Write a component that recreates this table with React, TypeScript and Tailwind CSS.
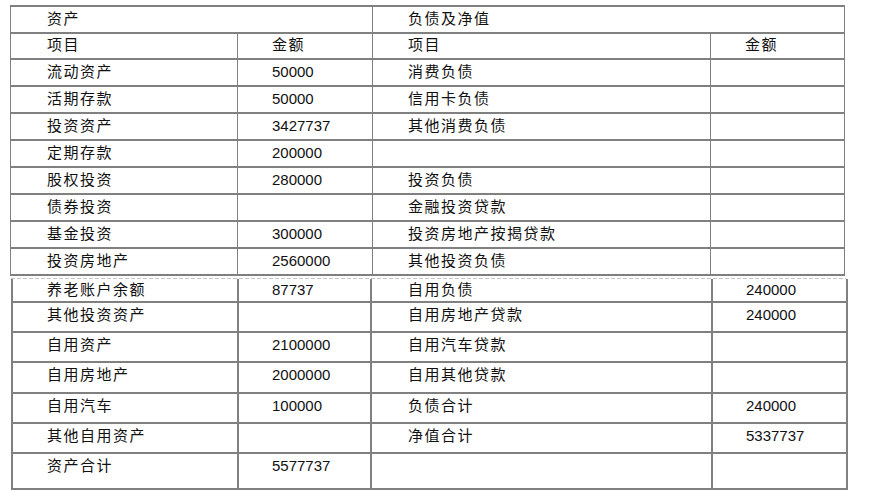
const font = { fontFamily: '"Liberation Sans", "Noto Sans CJK SC", sans-serif' };

type Row = [string, string, string, string];

const topRows: Row[] = [
  ["流动资产", "50000", "消费负债", ""],
  ["活期存款", "50000", "信用卡负债", ""],
  ["投资资产", "3427737", "其他消费负债", ""],
  ["定期存款", "200000", "", ""],
  ["股权投资", "280000", "投资负债", ""],
  ["债券投资", "", "金融投资贷款", ""],
  ["基金投资", "300000", "投资房地产按揭贷款", ""],
  ["投资房地产", "2560000", "其他投资负债", ""],
];

const bottomRows: { cells: Row; h: string; pt: string }[] = [
  { cells: ["养老账户余额", "87737", "自用负债", "240000"], h: "h-[22px]", pt: "pt-[2px]" },
  { cells: ["其他投资资产", "", "自用房地产贷款", "240000"], h: "h-[30px]", pt: "pt-[3px]" },
  { cells: ["自用资产", "2100000", "自用汽车贷款", ""], h: "h-[30px]", pt: "pt-[3px]" },
  { cells: ["自用房地产", "2000000", "自用其他贷款", ""], h: "h-[31px]", pt: "pt-[3px]" },
  { cells: ["自用汽车", "100000", "负债合计", "240000"], h: "h-[30px]", pt: "pt-[3px]" },
  { cells: ["其他自用资产", "", "净值合计", "5337737"], h: "h-[30px]", pt: "pt-[3px]" },
  { cells: ["资产合计", "5577737", "", ""], h: "h-[36px]", pt: "pt-[3px]" },
];

function TopTable() {
  return (
    <div className="ml-[10px] mt-[5px] w-[835px] border-b-2 border-[#808080]">
      {/* section header */}
      <div className="grid h-[27px] grid-cols-[362px_473px] border-t-2 border-[#808080]">
        <div className="flex items-center border-l border-[#808080] pb-[2px] pl-[36px]">资产</div>
        <div className="flex items-center border-x border-[#808080] pb-[2px] pl-[35px]">负债及净值</div>
      </div>
      <div className="grid h-[26px] grid-cols-[227px_135px_338px_135px] border-t-2 border-[#808080]">
        <div className="flex items-center border-l border-[#808080] pb-[2px] pl-[36px]">项目</div>
        <div className="flex items-center border-l border-[#808080] pb-[2px] pl-[34px]">金额</div>
        <div className="flex items-center border-l border-[#808080] pb-[2px] pl-[35px]">项目</div>
        <div className="flex items-center border-x border-[#808080] pb-[2px] pl-[34px]">金额</div>
      </div>
      {topRows.map((r, i) => (
        <div key={i} className="grid h-[27px] grid-cols-[227px_135px_338px_135px] border-t-2 border-[#808080]">
          <div className="flex items-center border-l border-[#808080] pb-[2px] pl-[36px]">{r[0]}</div>
          <div className="flex items-center border-l border-[#808080] pb-[2px] pl-[34px] tracking-normal">{r[1]}</div>
          <div className="flex items-center border-l border-[#808080] pb-[2px] pl-[35px]">{r[2]}</div>
          <div className="flex items-center border-x border-[#808080] pb-[2px] pl-[34px] tracking-normal">{r[3]}</div>
        </div>
      ))}
    </div>
  );
}

function BottomTable() {
  return (
    <div className="ml-[11px] mt-[2px] w-[837px]">
      <div className="h-px w-[835px] bg-[repeating-linear-gradient(90deg,#c4c4c4_0_4px,transparent_4px_6px)]" />
      <div className="border-b-2 border-[#808080]">
        {bottomRows.map((r, i) => (
          <div
            key={i}
            className={`grid grid-cols-[226px_133px_341px_137px] ${r.h} ${i > 0 ? "border-t-2 border-[#808080]" : ""}`}
          >
            <div className={`border-l-2 border-[#808080] pl-[34px] ${r.pt}`}>{r.cells[0]}</div>
            <div className={`border-l-2 border-[#808080] pl-[33px] tracking-normal ${r.pt}`}>{r.cells[1]}</div>
            <div className={`border-l-2 border-[#808080] pl-[36px] ${r.pt}`}>{r.cells[2]}</div>
            <div className={`border-x-2 border-[#808080] pl-[33px] tracking-normal ${r.pt}`}>{r.cells[3]}</div>
          </div>
        ))}
      </div>
    </div>
  );
}

export default function App() {
  return (
    <div
      className="h-[498px] w-[869px] bg-white text-[15px] leading-[18px] tracking-[1.5px] text-[#111]"
      style={font}
    >
      <TopTable />
      <BottomTable />
    </div>
  );
}
